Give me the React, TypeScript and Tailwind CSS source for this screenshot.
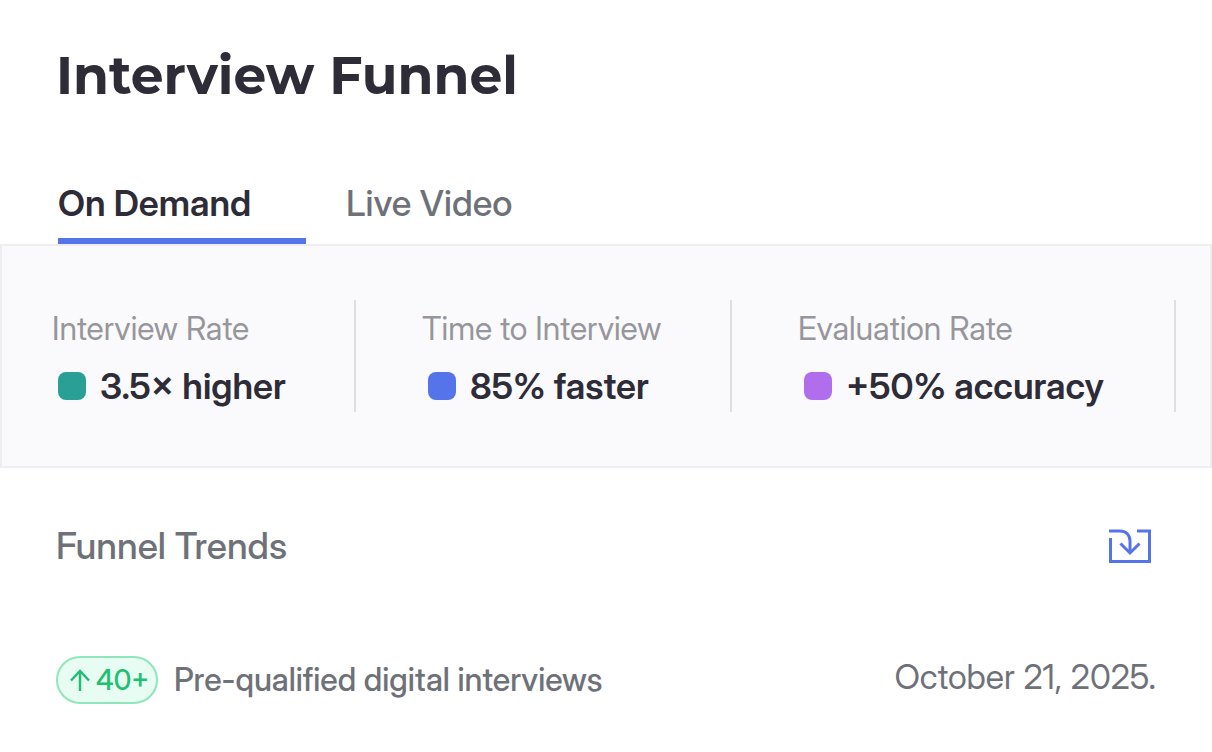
import { useState } from "react";

const tabs = ["On Demand", "Live Video"];

const stats = [
  { label: "Interview Rate", value: "3.5× higher", color: "bg-[#2a9f96]", pad: "pl-12" },
  { label: "Time to Interview", value: "85% faster", color: "bg-[#5674e9]", pad: "pl-16" },
  { label: "Evaluation Rate", value: "+50% accuracy", color: "bg-[#b06eec]", pad: "pl-16" },
];

const ImportIcon = () => (
  <svg width="42" height="34" viewBox="0 0 42 34" fill="none" stroke="currentColor" strokeWidth="3" aria-hidden="true">
    <path d="M1.5 9V32.5H40.5V2H28" />
    <path d="M0 2H11C17 2 21 6 21 12V24" />
    <path d="M11.5 14.5L21 24L30.5 14.5" />
  </svg>
);

const ArrowUp = () => (
  <svg width="20" height="22" viewBox="0 0 20 22" fill="none" stroke="currentColor" strokeWidth="2.5" aria-hidden="true">
    <path d="M10 22V2" />
    <path d="M1 11.5L10 2L19 11.5" />
  </svg>
);

const App = () => {
  const [active, setActive] = useState(tabs[0]);

  return (
    <main className="bg-white font-['Inter_Display','Inter',sans-serif] text-[#2d2c37]">
      <header className="px-14 pt-11">
        <h1 className="font-['Montserrat','Inter',sans-serif] text-[52px] leading-16 font-bold whitespace-nowrap">
          Interview Funnel
        </h1>
        <div role="tablist" className="mt-16 flex gap-10 pl-0.5">
          {tabs.map((tab) => (
            <button
              key={tab}
              role="tab"
              aria-selected={tab === active}
              onClick={() => setActive(tab)}
              className={
                tab === active
                  ? "h-18 w-62 border-b-6 border-[#5674e9] pb-1 text-left text-4xl font-semibold whitespace-nowrap"
                  : "h-18 w-62 border-b-6 border-transparent pb-1 text-left text-4xl font-medium text-[#6e7278] whitespace-nowrap"
              }
            >
              {tab}
            </button>
          ))}
        </div>
      </header>

      <section className="grid grid-cols-[354fr_376fr_444fr] border-2 border-[#eeeef0] bg-[#fafafc] py-[54px] pr-[34px]">
        {stats.map((stat) => (
          <div key={stat.label} className={`${stat.pad} h-28 border-r-2 border-[#dfdfe2] pt-2`}>
            <p className="pl-0.5 text-[32px] leading-[42px] text-[#96969b] whitespace-nowrap">{stat.label}</p>
            <p className="mt-2.5 flex items-center gap-3.5 pl-2 text-4xl leading-13 font-semibold whitespace-nowrap">
              <span className={`${stat.color} size-7 shrink-0 rounded-lg`} />
              {stat.value}
            </p>
          </div>
        ))}
      </section>

      <section className="px-14 pt-13">
        <div className="flex items-center justify-between">
          <h2 className="text-[37px] leading-13 font-medium text-[#6e7278]">Funnel Trends</h2>
          <button aria-label="Import trends" className="mr-[5px] text-[#5674e9]">
            <ImportIcon />
          </button>
        </div>
        <div className="mt-21 flex items-start justify-between text-[#6e7278]">
          <div className="flex items-center gap-4">
            <span className="flex h-12 items-center gap-1.5 rounded-full border-2 border-[#8fe6bd] bg-[#e7fdf3] pr-[7px] pl-3 text-[28px] font-medium text-[#20c073]">
              <ArrowUp />
              40+
            </span>
            <p className="text-[32px] leading-12 font-medium whitespace-nowrap">Pre-qualified digital interviews</p>
          </div>
          <time dateTime="2025-10-21" className="text-[34px] leading-[42px] whitespace-nowrap">
            October 21, 2025.
          </time>
        </div>
      </section>
    </main>
  );
};

export default App;
